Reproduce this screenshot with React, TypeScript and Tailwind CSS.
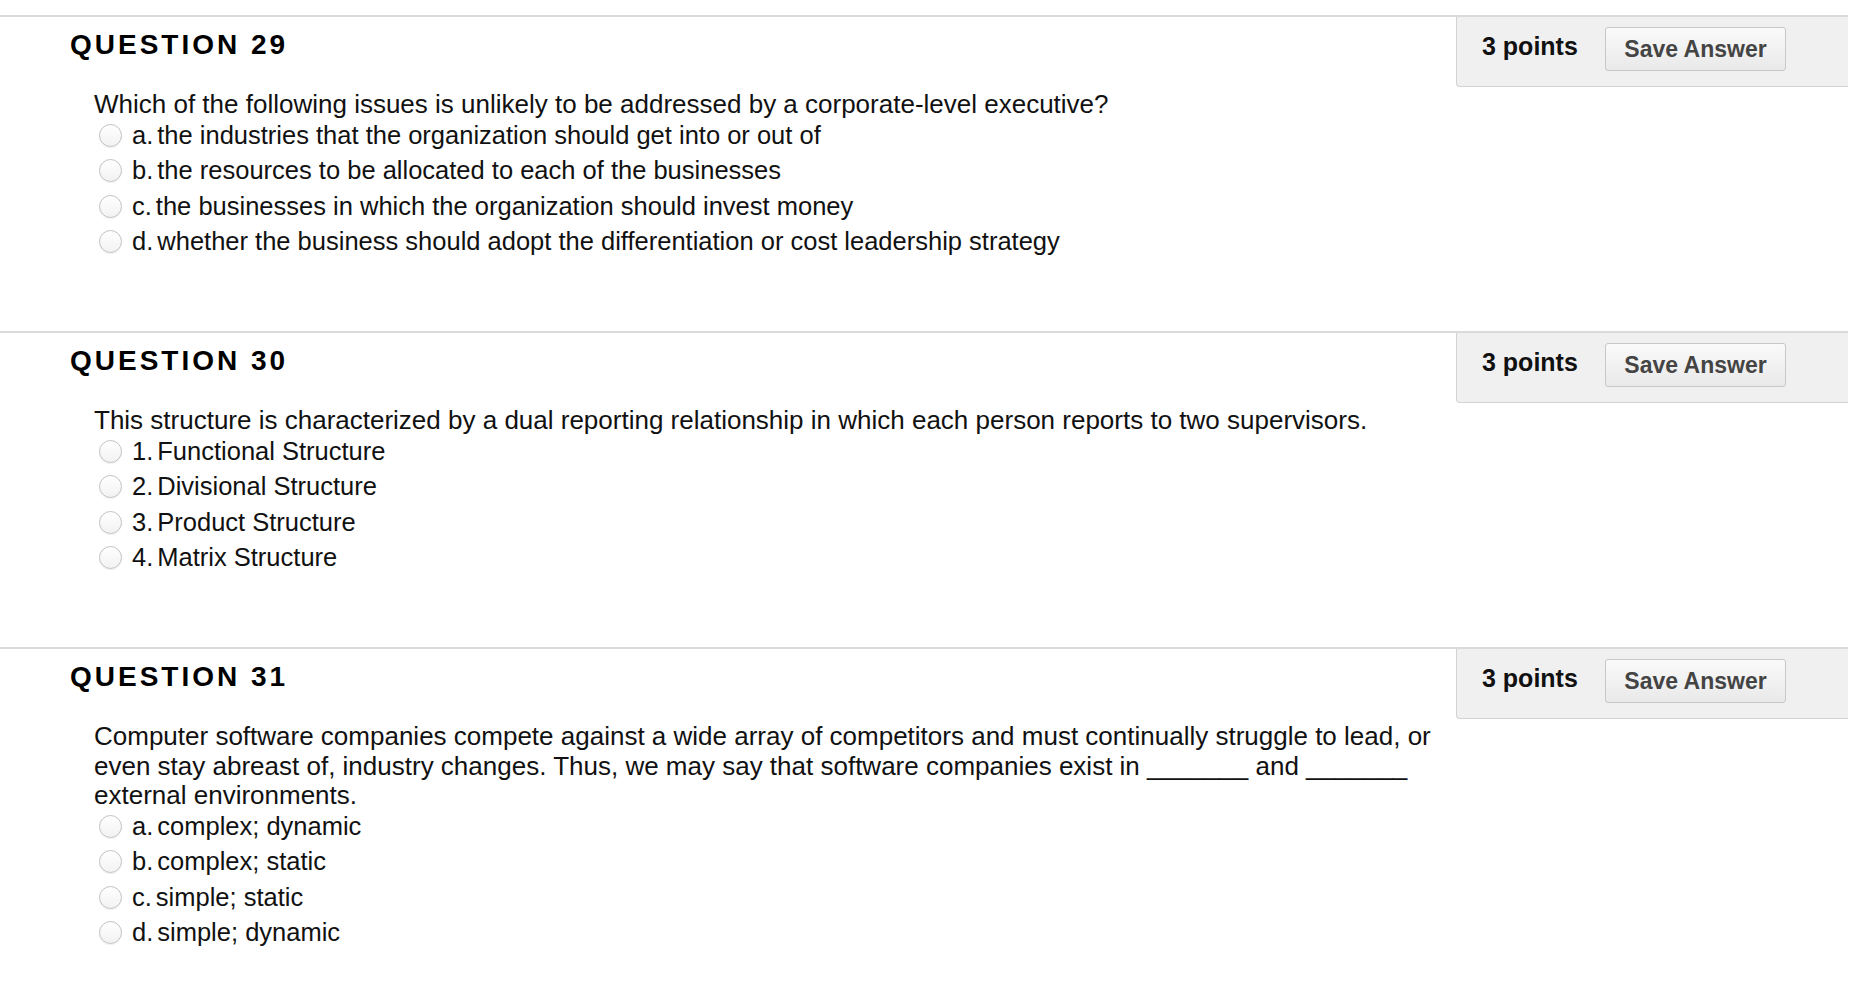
const questions = [
    {
        number: 29,
        text: "Which of the following issues is unlikely to be addressed by a corporate-level executive?",
        options: [
            ["a.", "the industries that the organization should get into or out of"],
            ["b.", "the resources to be allocated to each of the businesses"],
            ["c.", "the businesses in which the organization should invest money"],
            ["d.", "whether the business should adopt the differentiation or cost leadership strategy"]
        ]
    },
    {
        number: 30,
        text: "This structure is characterized by a dual reporting relationship in which each person reports to two supervisors.",
        options: [
            ["1.", "Functional Structure"],
            ["2.", "Divisional Structure"],
            ["3.", "Product Structure"],
            ["4.", "Matrix Structure"]
        ]
    },
    {
        number: 31,
        text: "Computer software companies compete against a wide array of competitors and must continually struggle to lead, or even stay abreast of, industry changes. Thus, we may say that software companies exist in _______ and _______ external environments.",
        options: [
            ["a.", "complex; dynamic"],
            ["b.", "complex; static"],
            ["c.", "simple; static"],
            ["d.", "simple; dynamic"]
        ]
    }
];

const App = () => {
    return (
        <div className="bg-white min-h-screen pt-[15px] text-[#111] font-['Liberation_Sans',Arial,sans-serif]">
            {questions.map((q) => (
                <section
                    key={q.number}
                    className="w-[1848px] h-[316px] border-t-2 border-[#dadada] flex"
                >
                    {/* Question body */}
                    <div className="flex-1 pl-[70px] pt-[13px]">
                        <h2 className="text-[28px] leading-[30px] font-bold tracking-[3px] text-black">
                            QUESTION {q.number}
                        </h2>
                        <div className="pl-[24px] pt-[30px]">
                            <p className="text-[26px] leading-[29.5px]">{q.text}</p>
                            <ul className="-mt-[2px]">
                                {q.options.map(([label, opt]) => (
                                    <li key={label} className="h-[35.5px] flex items-center text-[25.5px] leading-[29.5px]">
                                        <span className="ml-[5px] mr-[10px] w-[23px] h-[23px] rounded-full border border-[#c2c2c2] bg-gradient-to-b from-white to-[#f2f2f2] shadow-[0_1px_1px_rgba(0,0,0,0.06)] shrink-0" />
                                        <span>{label}</span>
                                        <span className="ml-[4px]">{opt}</span>
                                    </li>
                                ))}
                            </ul>
                        </div>
                    </div>

                    {/* Points & save */}
                    <div className="w-[392px] h-[70px] bg-[#f0f0f0] border-l border-b border-[#d2d2d2] rounded-bl-[4px] pl-[25px] pt-[10px]">
                        <div className="flex items-center h-[44px]">
                            <span className="text-[25px] font-bold text-[#111] w-[96px] -mt-[4px]">3 points</span>
                            <button className="ml-[27px] w-[181px] h-[44px] rounded-[3px] border border-[#c8c8c8] bg-gradient-to-b from-[#fafafa] to-[#e9e9e9] text-[23px] font-bold text-[#444]">
                                Save Answer
                            </button>
                        </div>
                    </div>
                </section>
            ))}
        </div>
    );
};

export default App;
